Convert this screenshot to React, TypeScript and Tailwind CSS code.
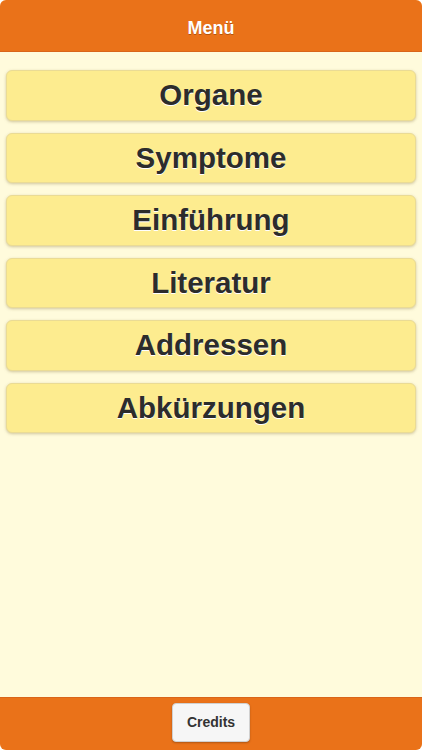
const items = ["Organe", "Symptome", "Einführung", "Literatur", "Addressen", "Abkürzungen"];

export default function App() {
  return (
    <div
      className="flex h-[750px] w-[422px] flex-col overflow-hidden rounded-[6px] bg-[#fffbdc]"
      style={{ fontFamily: '"Liberation Sans", Arial, sans-serif' }}
    >
      {/* Header */}
      <header className="flex h-[52px] shrink-0 items-center justify-center border-b border-[#d9651a] bg-[#ea7219] pt-[5px]">
        <h1 className="text-[18px] font-bold text-white [text-shadow:0_1px_0_#b4540f]">Menü</h1>
      </header>

      {/* Menu list */}
      <main className="flex flex-1 flex-col gap-[12px] px-[6px] pt-[18px]">
        {items.map((label) => (
          <button
            key={label}
            className="flex h-[50.5px] items-center justify-center rounded-[6px] border border-[#eadb95] bg-[#fdec8f] text-[29.5px] font-bold text-[#2c2c2c] shadow-[0_1px_3px_rgba(120,100,40,0.35)] [text-shadow:0_1px_0_#ffffff]"
          >
            {label}
          </button>
        ))}
      </main>

      {/* Footer */}
      <footer className="flex h-[53px] shrink-0 items-start justify-center border-t border-[#d9651a] bg-[#ea7219] pt-[5px]">
        <button className="flex h-[39px] w-[78px] items-center justify-center rounded-[4px] border border-[#d0d0d0] bg-[#f6f6f6] text-[14px] font-bold text-[#333] shadow-[0_1px_2px_rgba(0,0,0,0.25)]">
          Credits
        </button>
      </footer>
    </div>
  );
}
